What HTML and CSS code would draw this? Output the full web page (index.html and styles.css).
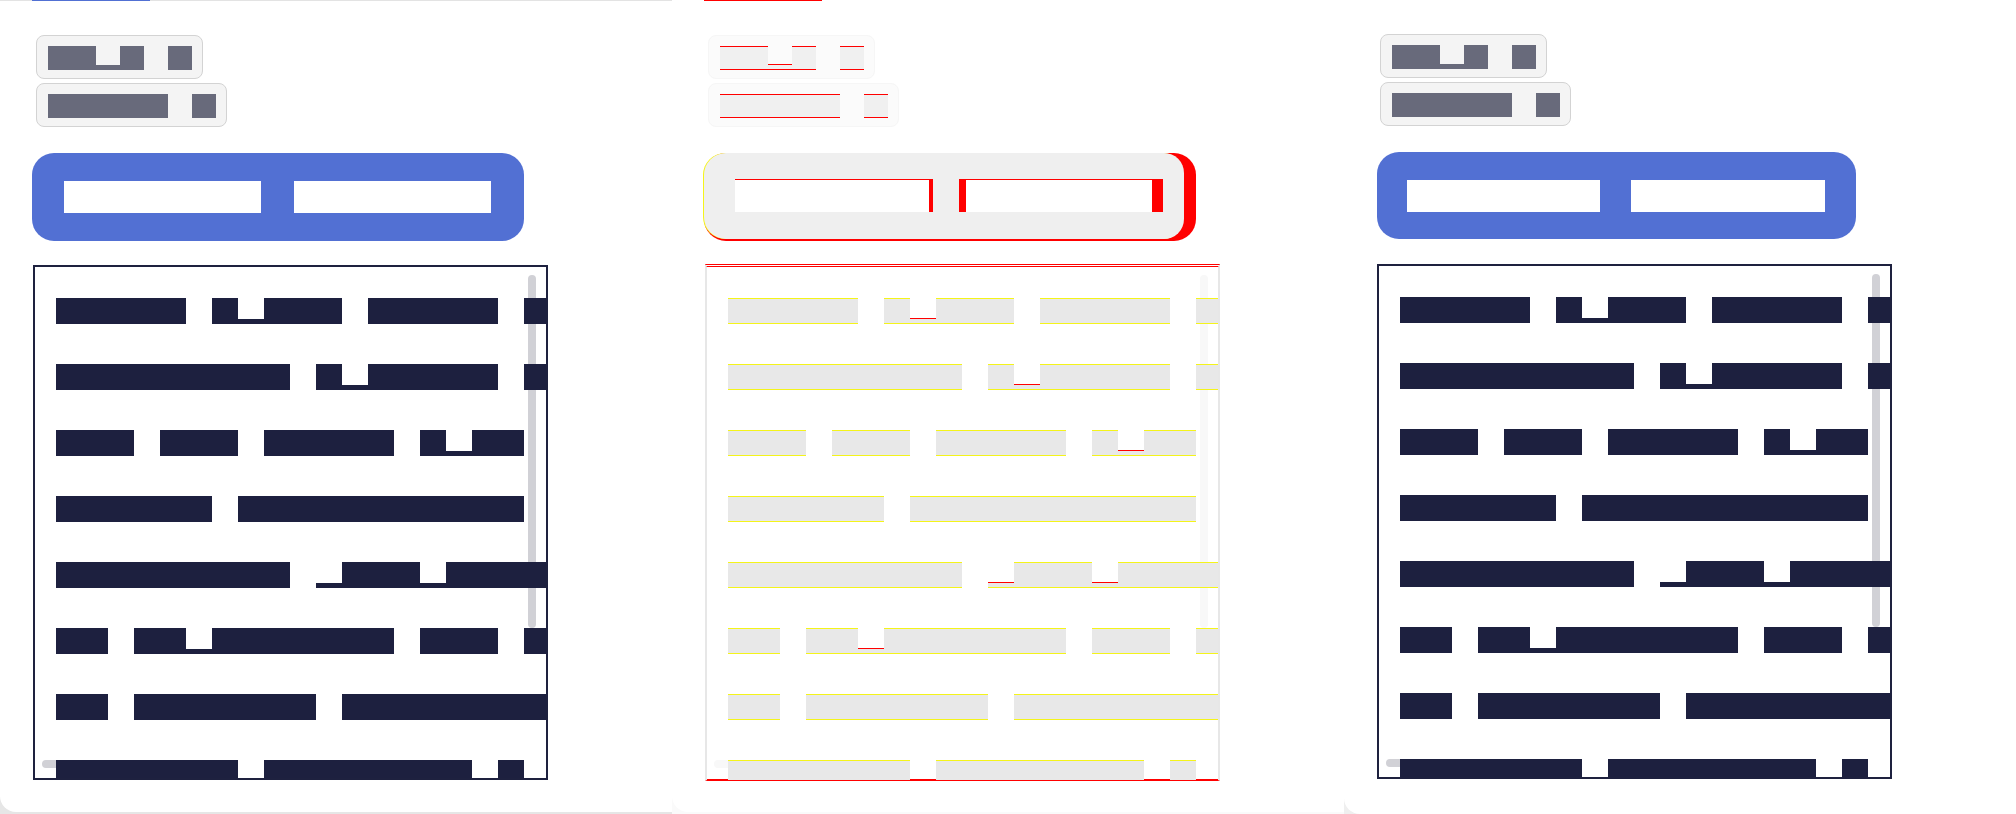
FILE: index.html
```html
<!DOCTYPE html>
<html lang="en">
<head>
<meta charset="utf-8">
<title>Visual diff</title>
<link rel="stylesheet" href="styles.css">
</head>
<body>
<main class="shots">

  <!-- expected -->
  <section class="panel panel-expected">
    <div class="card">
      <div class="topline"><span class="tab"></span></div>
      <div class="chips">
        <div class="chip"><span class="w"><span class="cb k2"></span><span class="cu"></span><span class="cb k1"></span></span><span class="cb k1"></span></div>
        <div class="chip"><span class="cb k5"></span><span class="cb k1"></span></div>
      </div>
      <div class="seg"><span class="lbl"></span><span class="lbl"></span></div>
      <div class="list">
        <span class="vthumb"></span><span class="hthumb"></span>
        <div class="row"><span class="b n5"></span><span class="w"><span class="b n1"></span><span class="u"></span><span class="b n3"></span></span><span class="b n5"></span><span class="b n10"></span></div>
        <div class="row"><span class="b n9"></span><span class="w"><span class="b n1"></span><span class="u"></span><span class="b n5"></span></span><span class="b n10"></span></div>
        <div class="row"><span class="b n3"></span><span class="b n3"></span><span class="b n5"></span><span class="w"><span class="b n1"></span><span class="u"></span><span class="b n2"></span></span></div>
        <div class="row"><span class="b n6"></span><span class="b n11"></span></div>
        <div class="row"><span class="b n9"></span><span class="w"><span class="u"></span><span class="b n3"></span><span class="u"></span><span class="b n10"></span></span></div>
        <div class="row"><span class="b n2"></span><span class="w"><span class="b n2"></span><span class="u"></span><span class="b n7"></span></span><span class="b n3"></span><span class="b n10"></span></div>
        <div class="row"><span class="b n2"></span><span class="b n7"></span><span class="b n10"></span></div>
        <div class="row"><span class="b n7"></span><span class="b n8"></span><span class="b n1"></span></div>
      </div>
    </div>
  </section>

  <!-- diff -->
  <section class="panel panel-diff">
    <div class="card">
      <div class="topline"><span class="tab"></span></div>
      <div class="chips">
        <div class="chip"><span class="w"><span class="cb k2"></span><span class="cu"></span><span class="cb k1"></span></span><span class="cb k1"></span></div>
        <div class="chip"><span class="cb k5"></span><span class="cb k1"></span></div>
      </div>
      <div class="dseg">
        <div class="ghost"><span class="dlbl1"></span><span class="dlbl2"></span></div>
      </div>
      <div class="list">
        <span class="vthumb"></span><span class="hthumb"></span>
        <div class="row"><span class="b n5"></span><span class="w"><span class="b n1"></span><span class="u"></span><span class="b n3"></span></span><span class="b n5"></span><span class="b n10"></span></div>
        <div class="row"><span class="b n9"></span><span class="w"><span class="b n1"></span><span class="u"></span><span class="b n5"></span></span><span class="b n10"></span></div>
        <div class="row"><span class="b n3"></span><span class="b n3"></span><span class="b n5"></span><span class="w"><span class="b n1"></span><span class="u"></span><span class="b n2"></span></span></div>
        <div class="row"><span class="b n6"></span><span class="b n11"></span></div>
        <div class="row"><span class="b n9"></span><span class="w"><span class="u"></span><span class="b n3"></span><span class="u"></span><span class="b n10"></span></span></div>
        <div class="row"><span class="b n2"></span><span class="w"><span class="b n2"></span><span class="u"></span><span class="b n7"></span></span><span class="b n3"></span><span class="b n10"></span></div>
        <div class="row"><span class="b n2"></span><span class="b n7"></span><span class="b n10"></span></div>
        <div class="row"><span class="b n7"></span><span class="b n8"></span><span class="b n1"></span></div>
      </div>
    </div>
  </section>

  <!-- actual -->
  <section class="panel panel-actual">
    <div class="card">
      <div class="chips">
        <div class="chip"><span class="w"><span class="cb k2"></span><span class="cu"></span><span class="cb k1"></span></span><span class="cb k1"></span></div>
        <div class="chip"><span class="cb k5"></span><span class="cb k1"></span></div>
      </div>
      <div class="seg"><span class="lbl"></span><span class="lbl"></span></div>
      <div class="list">
        <span class="vthumb"></span><span class="hthumb"></span>
        <div class="row"><span class="b n5"></span><span class="w"><span class="b n1"></span><span class="u"></span><span class="b n3"></span></span><span class="b n5"></span><span class="b n10"></span></div>
        <div class="row"><span class="b n9"></span><span class="w"><span class="b n1"></span><span class="u"></span><span class="b n5"></span></span><span class="b n10"></span></div>
        <div class="row"><span class="b n3"></span><span class="b n3"></span><span class="b n5"></span><span class="w"><span class="b n1"></span><span class="u"></span><span class="b n2"></span></span></div>
        <div class="row"><span class="b n6"></span><span class="b n11"></span></div>
        <div class="row"><span class="b n9"></span><span class="w"><span class="u"></span><span class="b n3"></span><span class="u"></span><span class="b n10"></span></span></div>
        <div class="row"><span class="b n2"></span><span class="w"><span class="b n2"></span><span class="u"></span><span class="b n7"></span></span><span class="b n3"></span><span class="b n10"></span></div>
        <div class="row"><span class="b n2"></span><span class="b n7"></span><span class="b n10"></span></div>
        <div class="row"><span class="b n7"></span><span class="b n8"></span><span class="b n1"></span></div>
      </div>
    </div>
  </section>

</main>
</body>
</html>
```

FILE: styles.css
```css
* { box-sizing: border-box; }
html, body { margin: 0; padding: 0; }
body {
  width: 2016px;
  height: 814px;
  overflow: hidden;
  background: #ffffff;
  font-family: "Liberation Sans", Arial, sans-serif;
}

.shots {
  display: grid;
  grid-template-columns: 672px 672px 672px;
  height: 814px;
}

.panel { height: 814px; overflow: hidden; background: #e6e6e6; }
.panel-diff { background: #fafafa; }
.panel-actual { background: #efefef; }

.card {
  background: #ffffff;
  height: 812px;
  border-radius: 0 0 0 16px;
  overflow: hidden;
}
.panel-actual .card { height: 814px; }

/* top tab strip */
.topline { display: flex; height: 1px; background: #e3e3e3; }
.tab { width: 118px; margin-left: 32px; background: #5170d3; }
.panel-diff .topline { background: transparent; }
.panel-diff .tab { background: #ff0000; }

/* chips */
.chips {
  display: flex;
  flex-direction: column;
  align-items: flex-start;
  gap: 4px;
  margin: 34px 0 0 36px;
}
.chip {
  display: flex;
  gap: 24px;
  padding: 10px 10.7px 8px;
  border: 1px solid #d3d3d3;
  border-radius: 8px;
  background: #f4f4f4;
}
.w { display: flex; flex-shrink: 0; }
.cb { height: 24px; background: #686a7b; flex-shrink: 0; }
.cu {
  width: 24px; height: 24px; flex-shrink: 0;
  background: linear-gradient(to top, #686a7b 5px, transparent 5px);
}
.k1 { width: 24px; }
.k2 { width: 48px; }
.k5 { width: 120px; }

.panel-diff .chip { border-color: #f6f6f6; background: #fbfbfb; }
.panel-diff .cb { background: #f0f0f0; box-shadow: inset 0 1px 0 #ff0000, inset 0 -1px 0 #ff0000; }
.panel-diff .cu {
  background: linear-gradient(to bottom, transparent 18px, #ff0000 18px 19px, #f0f0f0 19px 23px, #ff0000 23px);
}

/* segmented bar */
.seg {
  display: flex;
  width: fit-content;
  gap: 33px;
  margin: 26px 0 0 32px;
  padding: 28px 33px 28px 32px;
  background: #5270d3;
  border-radius: 22px;
}
.lbl { width: 197px; height: 32px; background: #ffffff; }

.panel-actual .seg {
  margin-left: 33px;
  gap: 31px;
  padding: 28px 31.5px 27px 30px;
}
.panel-actual .lbl { width: 193.3px; }

/* diff version of the bar */
.dseg {
  width: 492px;
  height: 88px;
  margin: 26px 0 0 32px;
  background: #ff0000;
  border-radius: 22px;
}
.ghost {
  display: flex;
  align-items: flex-start;
  gap: 26.4px;
  width: 480px;
  height: 86px;
  margin-top: 1px;
  padding: 26px 0 0 31px;
  background: #efefef;
  border-radius: 22px 20px 20px 22px;
  box-shadow: -1px 0 0 #f4f41a;
}
.dlbl1 {
  width: 198px; height: 33px;
  border-top: 1px solid #ff0000;
  background: linear-gradient(to right, #ffffff 194px, #ff0000 194px);
}
.dlbl2 {
  width: 203.6px; height: 33px;
  border-top: 1px solid #ff0000;
  background: linear-gradient(to right, #ff0000 6.6px, #ffffff 6.6px 193.1px, #ff0000 193.1px);
}

/* list box */
.list {
  position: relative;
  display: flex;
  flex-direction: column;
  gap: 40px;
  width: 515px;
  height: 515px;
  margin: 24px 0 0 33px;
  padding: 31px 0 0 21px;
  border: 2px solid #1e213f;
  overflow: hidden;
}
.panel-actual .list { margin-top: 25px; }
.panel-diff .list {
  margin-top: 23px;
  height: 517px;
  border: 2px solid #e7e7e7;
  border-top: 3px double #ff0000;
  border-bottom: 1px solid #ff0000;
  box-shadow: inset 0 -1px 0 #ff0000;
}

.vthumb {
  position: absolute;
  left: 493px; top: 8px;
  width: 8px; height: 353px;
  border-radius: 4px;
  background: #d1d1d6;
}
.hthumb {
  position: absolute;
  left: 7px; top: 493px;
  width: 180px; height: 8px;
  border-radius: 4px;
  background: #d1d1d6;
}
.panel-diff .vthumb, .panel-diff .hthumb { background: #f8f8f8; }

.row {
  position: relative;
  z-index: 1;
  display: flex;
  gap: 26px;
  height: 26px;
  flex-shrink: 0;
}
.b { height: 26px; background: #1d203f; flex-shrink: 0; }
.u {
  width: 26px; height: 26px; flex-shrink: 0;
  background: linear-gradient(to top, #1d203f 5px, transparent 5px);
}
.n1 { width: 26px; }
.n2 { width: 52px; }
.n3 { width: 78px; }
.n5 { width: 130px; }
.n6 { width: 156px; }
.n7 { width: 182px; }
.n8 { width: 208px; }
.n9 { width: 234px; }
.n10 { width: 260px; }
.n11 { width: 286px; }

.panel-diff .b {
  background: #e8e8e8;
  box-shadow: inset 0 1px 0 #f4f41a, inset 0 -1px 0 #f4f41a;
}
.panel-diff .u {
  background: linear-gradient(to bottom, transparent 20px, #ff0000 20px 21px, #e8e8e8 21px 25px, #f4f41a 25px);
}
```
